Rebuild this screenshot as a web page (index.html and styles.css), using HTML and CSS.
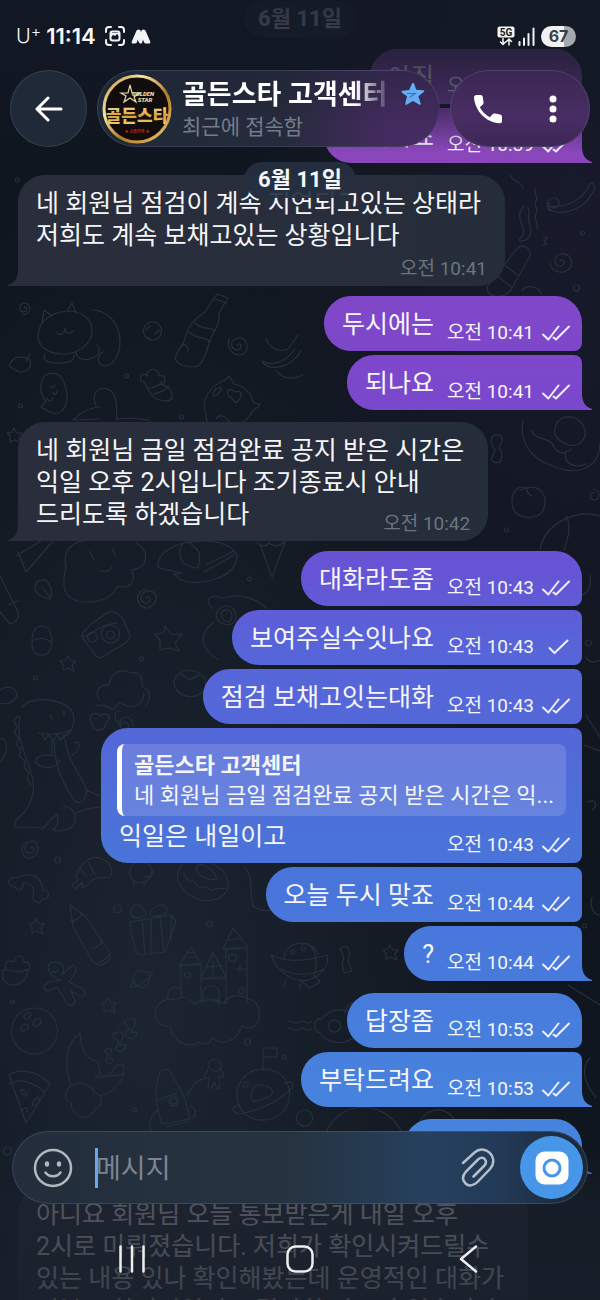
FILE: index.html
```html
<!DOCTYPE html>
<html lang="ko">
<head>
<meta charset="utf-8">
<meta name="viewport" content="width=device-width, initial-scale=1">
<title>골든스타 고객센터</title>
<link rel="stylesheet" href="styles.css">
</head>
<body>
<svg class="defs" width="0" height="0" aria-hidden="true">
  <symbol id="read" viewBox="0 0 28 16"><path d="M1 9.5 6.300 14.500 16.500 1.500M11.500 12.500 14 14.500 27 1.500"/></symbol>
  <symbol id="sent" viewBox="0 0 28 16"><path d="M7.500 9 12.500 14 25.500 1.500"/></symbol>
</svg>
<main class="chat">
  <svg class="doodles" viewBox="0 0 600 1300" preserveAspectRatio="xMidYMin slice" aria-hidden="true">
    <!-- cat, sweets and bottle -->
    <path d="M38 334c2-14 14-22 30-23 14 0 24 8 24 20 0 13-14 23-28 23s-27-6-26-20ZM42 322l2-12 8 6M67 311l5-8 4 10M57 333c5 4 8-1 8-5 0 5 4 7 8 3M92 310c12 0 28 10 28 32 0 14-8 24-15 24-9-1-8-10-2-14M45 354c-3 6 2 9 12 9s18-1 17-8M76 352c0 6 8 10 16 6 8-2 9-8 5-13"/>
    <path d="M217 294l11 4-9 15c2 12-7 20-10 30-3 12-8 24-15 24-8 0-16-2-19-8 2-9 8-13 10-20 2-12 9-20 20-27ZM215 299l11 4M195 323c8 8 12 2 20 8M189 332c8 8 14 3 21 10M180 348c4-6 8-3 8 4"/>
    <path d="M237 345c3-4 7 3 1 5-7 1-10-10 0-12 12-1 12 16 2 17-10 0-14-12-10-16M24 308c2-3 5 2 0 4-5 0-6-8 0-9 8 0 8 12-2 12M152 322a9 9 0 1 0 1 0M146 330l4-4M155 334l4-4M148 338l2 2M9 366c3-8 10-12 20-7 4 6 0 13-10 13ZM26 361l4-7"/>
    <path d="M266 339c5 10 12 14 22 10l10-14M262 361c10 6 24 1 33-12M263 363c8 8 28 5 38-12M277 371c6 9 18 8 26 4"/>
    <path d="M41 384c1-11 13-14 20-7 8 12 9 32-3 36-8 2-12-4-17-6l5-6c-5-5-6-10-5-17ZM50 386c2 3 4 2 5-1M47 398c1 4 6 4 5 0M53 392c1 3 4 3 4-1"/>
    <path d="M141 381c-2-8 4-8 6-5 0-9 12-9 12 0 8-2 7 7 2 9 9 0 12 8 11 14-6 4-17 1-21-5-5-6-5-13-10-13ZM149 388c8-1 12-4 13-7M153 394c8-1 12-4 16-8"/>
    <path d="M96 406c-6-14 5-22 15-15 7 6 5 17 6 30M73 420c7-7 14-12 27-13M73 420l26-1M117 419c15-2 23 0 32 1M204 405c2-12 10-21 21-25l4-4 5 8c11 2 18 11 19 18l7 3-8 7c-4 8-8 10-16 13M204 405l3 17M216 389c-5 6-4 10 3 4 4-5 2-7-3-4ZM231 398c-7-5-2-12 4-6 8-3 8 5 1 11ZM216 419c4-6 12-2 13 4"/>
    <!-- cake, cloud, pie, ice cream -->
    <path d="M16 556l30-18M18 552l8 20 28-32M66 568c-3-15 2-25 20-28M66 568c-7 26 4 34 20 34 16 0 26-4 32-16 12 4 18-4 14-16 17-2 18-20 4-27M100 571c5 1 10 1 12-5M90 551l4 9M112 549l4 7"/>
    <path d="M158 567c-2-14 18-26 44-26 28 0 38 12 34 20-4 17-36 26-55 19l-7-6 8-1c-14-3-22-4-24-6ZM180 555c-1-13 8-17 14-8 8 4 6 14 4 21-10 0-18-6-18-13ZM206 565l28-14M204 572l30-17M260 544l12 33 13-35M257 542c4 5 8 5 12 1 5 4 10 4 16-2"/>
    <path d="M37 582c4-3 7-1 8-3 7 7 8 13 5 20-9-1-16-7-15-13ZM43 588l7 10M146 598c3-4 7 3 1 5-7 1-9-9 0-12 12-2 12 15 1 17-12 1-15-17-2-19M165 626l6 8 11 0-7 9 4 8-10-3-9 2v-10l-5-6 9-1ZM68 656l3 5 5 0-4 4 2 6-5-3-6 2v-6l-3-3 6-1Z"/>
    <path d="M82 637c-1-5 5-8 8-12l17-12c6-4 15 1 18 11l5 11c1 7-12 12-18 16-11 8-14 9-18 2ZM82 637c12-2 16-13 36-14M92 632a5 5 0 1 0 1 0M110 625a9 9 0 1 0 1 0M110 631a4 4 0 1 0 1 0M32 641c0-14 8-17 14-14 6 3 6 11 6 16-1 9-5 13-12 12-7-1-8-6-8-14ZM32 641c7-4 14-3 20 2M0 576l16 32c5 6 2 14-6 16L0 612M8 605l11-4"/>
    <!-- bear and tree -->
    <path d="M212 608c-9-10 0-14 10-10 18-5 34 0 44 10M216 616c2-14 20-14 20 2-3 10-17 8-20-2ZM221 614c2-6 11-6 11 2s-10 7-11-2ZM214 622c-16 12-14 26 4 38M99 700c-5-10 2-16 10-15 2-12 12-18 22-12 10-2 12 6 11 14 10 2 8 14 4 18M174 684c0-18 30-18 32 0-2 16-27 18-32 0ZM181 674l9 6 9-5M0 690c8-6 16-2 17 5-2 7-10 10-17 8"/>
    <!-- dinosaur -->
    <path d="M22 708c4-12 42-12 51 5 3 12-2 22-14 27M38 733c9 2 24 2 33-3M42 734l3 6 4-5 4 6 4-6 4 5 4-6M50 715l2 4M64 711v5M20 716c-4 20 3 30 8 48 6 16 9 28-1 44-4 8-15 12-12 19l28 1 14-14c3 8-1 13-4 16 8 2 20 0 22-8 2-12-7-16-12-16M52 742v14c-8-2-18 0-16 7 8 7 22 5 24-3M54 742c1 24 8 40 20 58 8 8 14-4 12-12-9-18-19-30-21-49M74 743c8-4 6 8-2 12M76 813c14-6 18-5 25-6M86 790l14 6M18 716l-4 5 3 6-3 6 5 5-3 6 5 6-2 6 6 5-1 6 5 6-2 6 4 6"/>
    <path d="M96 706c9-4 12 4 18 3l6-7c12 9 23 4 24-9M120 711c-6-2-6 8-2 12M101 716c-9-8-15 4-8 8-3 9 14 8 13-2 8-4-1-12-5-6ZM119 726c0-12 14-12 14 0M124 722a4 4 0 1 0 1 0M0 738c8 0 9 16 0 24"/>
    <!-- bone, shrimp, doughnut -->
    <path d="M30 848c3-4 7 3 1 5-7 1-9-9 0-12 9-1 10 15-1 17-9 1-11-14-3-16M18 877c-5 0-11 2-9 7 3 4 6 2 7 4 3 5 8 0 7-5 9 0 12 6 10 11-2 9 9 11 9 5 8 2 9-8 1-9-2-14-11-18-25-13ZM76 877c4-14 14-22 24-19 11 4 14 13 10 19-8 2-17-2-22 8l-6 3v-6l-7 7-3-4 6-5ZM88 862l7 13M80 868l6 8"/>
    <path d="M178 873c3-14 18-16 32-10 15 6 21 17 17 27-7 14-27 13-39 4-8-6-12-14-10-21ZM196 866c6-5 18 4 21 13-9 2-21-3-21-13ZM183 873c4 3 3 10 9 8 5 0 3 8 11 6 6-1 6 6 12 2 4-2 8 1 10-1M131 867c6-9 22-5 21 5-2 14-20 15-23 1ZM143 876c6 2 10-1 10-6M134 882v5M144 882v5M245 868c9 8 4 25 8 38 8 7 20 5 30 0"/>
    <!-- pencil, present, gingerbread man -->
    <path d="M70 905l15 11 25 37c3 8-10 16-17 9L73 927ZM70 921c5 1 10-4 12-7M91 948c5 1 12-5 11-10M97 963c6-2 10-4 13-9M130 922l41-7 5 6-11 31-27 3c-5-10-7-24-8-33ZM171 917v22M142 920l3 34M151 919v35M160 917l4 36M146 916c-20 7-18-10-9-11 5 1 9 7 9 11ZM150 916c-2-10 15-15 17-7 1 6-10 8-17 7Z"/>
    <path d="M61 980c-12-2-19-18-6-18 9 0 10 8 7 13l7-7c5-6 9 0 6 5l-6 9 14 7c5 4 1 9-4 7l-8-5 4 11c-3 6-7 4-9 0l-9-15-8 4c-8-1-6-6 0-9ZM52 971l3 2 3-3M36 919l3 5 5 0-3 4 2 6-6-3-5 2v-6l-3-3 5-1ZM108 998l3 5 5 0-3 4 2 6-6-3-5 2v-6l-3-3 5-1Z"/>
    <path d="M3 970c7-2 16 6 24-1 3 14-17 22-24 10ZM6 970c-3-10 5-10 8-8 0-8 9-8 10 0 7-1 7 6 4 8M133 977c4-9 15-8 17 1-2 12-16 13-17-1ZM133 982c-9 12 12 2 20-9-3-2-6-1-8 0"/>
    <!-- bowling ball, pizza, moon -->
    <path d="M34 1008a23 23 0 1 0 1 0ZM24 1017c2-7 9-5 6 0-4 3-5 3-6 0ZM33 1024c2-8 9-7 8-1-4 4-7 4-8 1ZM21 1029c2-7 9-6 7-1-5 4-7 4-7 1ZM9 1075c10-7 28-5 41 9l-24 39ZM9 1084c10-6 24-3 35 8M21 1089c6 3 8 8 4 7-4-2-4-5-4-7ZM33 1102c4-7 8-5 5 1-4 5-7 3-5-1ZM22 1112c2-7 7-4 5 0"/>
    <path d="M80 1033c-14 10-17 30-9 53M80 1033c1 16 4 26 18 28l2 14-5 2c11 2 17-2 21-12l7-1c4 14-9 30-25 32M71 1086c-9 6-6 16 0 17 2 18 20 18 24 6 8-3 10-15-1-16-1-10-20-12-23-7ZM102 1076c8 1 16-1 22-2M104 1051c6-5 9-2 7 1l-2 7c6-1 4 4-1 5-5-5-1-6 0-9ZM112 1035c10-7 13-1 10 5l-3 6c8-4 10 0 2 6-7-2-6-4-2-10ZM124 1022c10-7 14-2 10 4l-4 7c9-3 9 2 2 6-9-2-7-6-3-10Z"/>
    <!-- castle on a cloud -->
    <path d="M181 998v-33h20v29M179 966l12-19 10 16ZM201 978l12-26 13 25ZM201 1003v-24h25v25M226 1000v-51h21v54M223 949l10-21 15 19ZM203 1002v-10c2-9 16-8 16 1v13M183 958l14-1M186 952l9 1M206 967l15-1M213 955v22M228 940l14-2M187 972a3 3 0 1 0 1 0M232 954a4 4 0 1 0 1 0M241 988a3 3 0 1 0 1 0M215 999a2 2 0 1 0 1 0M236 969h10M240 965v7M177 1000c-14-4-24 6-21 18 3 8 10 8 14 9 4 16 18 22 30 15 4 4 10 2 12-4 10 8 24 4 30-12 10 6 18-2 17-12 1-8-4-14-11-15-9-6-20-4-24 5-9-6-22-5-30 0-6-10-16-6-17-4ZM168 999c-2-16 15-14 14-5"/>
    <!-- rocket and astronaut -->
    <path d="M162 1124c-6-16-8-34-4-45 2-14 12-12 16 0 8 10 14 26 16 40ZM158 1100l19-7M173 1096a5 5 0 1 0 1 0M173 1098a3 3 0 1 0 1 0M166 1127l24-6M158 1110c-9 6-10 16-5 26M190 1106c7 3 7 9 2 12M187 1095c6-12 12-16 19-17M208 1064c2-7 14-6 13 3-3 7-12 4-13-3ZM208 1069l-4 9 5 0-1 10h4l2-6 3 7 3-2-1-10h5l-3-8"/>
    <!-- planet and flag -->
    <path d="M262 1069c-32 2-34 48-2 51 34 2 40-42 11-50ZM263 1070v-22l14 0v9h-14M252 1091c4-9 10-6 12-5 8 0 12 9 4 11-6 2-14 8-17 1ZM240 1105c-12 1-6 12 4 8 20-4 36-13 48-25 3-7-4-8-8-4M244 1083c4-4 6 0 2 5-4 0-3-3-2-5Z"/>
    <!-- flying saucer and shells -->
    <path d="M271 955c12 6 30 8 56 0 4 16-16 30-33 24-12-4-20-15-23-24ZM284 958c0-16 28-22 34-3M281 969c12 6 27 8 43 0M286 981l-2 6M300 984v6M292 950a2 2 0 1 0 1 0M303 947a2 2 0 1 0 1 0M288 1022c4-4 6 4 11 0s7 4 12 0M288 1029c4-4 6 4 11 0s7 4 12 0M321 1020c-8-5-8 14-2 12 12 17 38 13 42-8-6-17-30-19-40-4ZM334 1020a6 6 0 1 0 1 0M345 1013c2-10 12-14 16-8M380 1020c1-14 7-20 18-26 4 11-4 22-12 25M302 945c10-7 18 16 12 30l6 7-10 6-10-8M340 948l7-2 3 8-2 7 4 10-8 2-2-9 2-6ZM390 945l3 5 5 0-3 4 2 6-6-3-5 2v-6l-3-3 5-1Z"/>
    <path d="M304 1110a8 8 0 1 0 1 0M325 1135c12-36 62-38 78 0M418 1125c8-18 28-22 40 0"/>
    <!-- party side -->
    <path d="M510 175c4 9 12 6 13 13M549 206c15 3 31-5 39-18 2-10 10-3 5 4-8 15-25 24-41 19-5-1-5-4-3-5ZM524 206c-8 8-3 16-1 22 4 9-6 10-3 13 12 0 12-11 9-19-2-7 2-9-1-14M536 188c-4 6 3 7 0 13s3 7 0 13 3 8 1 15M516 250c6-8 15-2 14 6l-19 34c-9 10-24 8-24-3ZM503 264l16 12M494 273l17 14M549 203a5 5 0 1 0 5-5c-8 0-9 10-2 12M560 261c3-4 7 3 1 5-7 1-9-9 0-12 12-2 15 15 3 18-8 1-14-4-14-9M543 237l4 1-3 3 3 3-5 1M522 291c4-7 18-5 19 3"/>
    <path d="M523 420c-4 22 8 38 27 45 30 14 50 0 50-22M531 430c5 11 20 7 23 17 4 8 13 7 17 2M555 428c3-15 24-16 30 2 2 14-14 20-22 12-6-2-9-7-8-14ZM566 451c-3 12 8 18 20 13M492 437c4-4 12-2 10 4l-3 7c4 3 3 9 1 14-6 2-10-1-8-5l3-7c-3-4-5-8-3-13ZM527 488c-16-5-18 16-12 24 8 8 23 6 27 0 8-14-1-28-15-24ZM527 488c0 5 1 6 5 8M527 488l-7 2M594 492c-6 2-4 8 1 8 6-2 5-10-2-11M540 550c4-25 34-42 60-34M566 516c6 10 2 22-2 34M580 595c8 0 12-10 10-20M586 658c5 6 10 4 14 2M586 715l14 22M584 745l16 6M588 802c8-4 10 4 4 8M592 897c-3 12 3 18 8 18M590 1058c-10 10-6 24 6 40M568 985l32 20"/>
    <!-- small sparkles -->
    <path d="M17 178a2 2 0 1 0 1 0M126 374a2 2 0 1 0 1 0M181 415a2 2 0 1 0 1 0M20 404a2 2 0 1 0 1 0M249 577a2 2 0 1 0 1 0M141 657a2 2 0 1 0 1 0M35 676a2 2 0 1 0 1 0M57 857a3 3 0 1 0 1 0M117 905a4 4 0 1 0 1 0M209 921a3 3 0 1 0 1 0M247 1039a3 3 0 1 0 1 0M134 1108a2 2 0 1 0 1 0M284 1055a2 2 0 1 0 1 0M12 1000a2 2 0 1 0 1 0M582 231a2 2 0 1 0 1 0M576 285a3 3 0 1 0 1 0M506 528a2 2 0 1 0 1 0M588 640a3 3 0 1 0 1 0M584 924a2 2 0 1 0 1 0M7 1147a4 4 0 1 0 1 0M14 428l3 5 5 0-3 4 2 6-6-3-5 2v-6l-3-3 5-1Z"/>
  </svg>

  <ol class="messages">
    <li class="day date-pill">6월 11일</li>
    <li class="msg out first"><p>아직</p><span class="meta"><time>오전 10:39</time><svg class="tick"><use href="#read"/></svg></span></li>
    <li class="msg out last"><p>는것이죠</p><span class="meta"><time>오전 10:39</time><svg class="tick"><use href="#read"/></svg></span></li>

    <li class="msg in stacked"><p>네 회원님 점검이 계속 지연되고있는 상태라<br>저희도 계속 보채고있는 상황입니다</p><span class="meta"><time>오전 10:41</time></span></li>

    <li class="msg out first"><p>두시에는</p><span class="meta"><time>오전 10:41</time><svg class="tick"><use href="#read"/></svg></span></li>
    <li class="msg out last"><p>되나요</p><span class="meta"><time>오전 10:41</time><svg class="tick"><use href="#read"/></svg></span></li>

    <li class="msg in"><p>네 회원님 금일 점검완료 공지 받은 시간은<br>익일 오후 2시입니다 조기종료시 안내<br>드리도록 하겠습니다</p><span class="meta"><time>오전 10:42</time></span></li>

    <li class="msg out first"><p>대화라도좀</p><span class="meta"><time>오전 10:43</time><svg class="tick"><use href="#read"/></svg></span></li>
    <li class="msg out"><p>보여주실수잇나요</p><span class="meta"><time>오전 10:43</time><svg class="tick"><use href="#sent"/></svg></span></li>
    <li class="msg out"><p>점검 보채고잇는대화</p><span class="meta"><time>오전 10:43</time><svg class="tick"><use href="#read"/></svg></span></li>
    <li class="msg out reply">
      <blockquote class="quote"><strong>골든스타 고객센터</strong><span>네 회원님 금일 점검완료 공지 받은 시간은 익...</span></blockquote>
      <p>익일은 내일이고</p><span class="meta"><time>오전 10:43</time><svg class="tick"><use href="#read"/></svg></span>
    </li>
    <li class="msg out"><p>오늘 두시 맞죠</p><span class="meta"><time>오전 10:44</time><svg class="tick"><use href="#read"/></svg></span></li>
    <li class="msg out last"><p>?</p><span class="meta"><time>오전 10:44</time><svg class="tick"><use href="#read"/></svg></span></li>

    <li class="msg out first"><p>답장좀</p><span class="meta"><time>오전 10:53</time><svg class="tick"><use href="#read"/></svg></span></li>
    <li class="msg out last"><p>부탁드려요</p><span class="meta"><time>오전 10:53</time><svg class="tick"><use href="#read"/></svg></span></li>

    <li class="msg out first last"><p>?</p><span class="meta"><time>오전 10:54</time><svg class="tick"><use href="#read"/></svg></span></li>

    <li class="msg in"><p>아니요 회원님 오늘 통보받은게 내일 오후<br>2시로 미뤄졌습니다. 저희가 확인시켜드릴수<br>있는 내용 있나 확인해봤는데 운영적인 대화가<br>전부 포함되어있어 드릴만한 자료가 없습니다</p></li>
  </ol>

  <div class="scrim"></div>

  <header class="top">
    <div class="status">
      <span class="carrier">U<sup>+</sup></span>
      <span class="clock">11:14</span>
      <svg class="capture" viewBox="0 0 20 20"><path d="M1 6V4a3 3 0 0 1 3-3h2M14 1h2a3 3 0 0 1 3 3v2M19 14v2a3 3 0 0 1-3 3h-2M6 19H4a3 3 0 0 1-3-3v-2"/><rect x="5.500" y="5.500" width="9" height="9" rx="2"/><path class="solid" d="M6 11l2-2 2 1 2-2 2 2v-3H6Z"/></svg>
      <svg class="brand" viewBox="0 0 20 15"><path d="M.8 12.500 5 2.800C6-.2 9.200-.2 10 3 10.800-.2 14-.2 15 2.800L19.200 12.500C19.600 13.800 19 14.500 18 14.500H14.800C13.500 14.500 13 13.500 12.500 12L12 10.500 11.300 13C11 14 10.500 14.500 9.500 14.500 8.300 14.500 7.800 13.500 7.400 12.300L6.800 10.500 6.200 12.500C5.800 13.800 5.200 14.500 4.200 14.500H2C.9 14.500.4 13.700.8 12.500Z"/></svg>
      <svg class="network" viewBox="0 0 18 20" role="img"><rect x=".5" y=".5" width="17" height="11" rx="2"/><text x="9" y="9.500">5G</text><path d="M6 12.500v6M3.500 16 6 18.500 8.500 16M12 19v-6M9.500 15.500 12 13l2.500 2.500"/></svg>
      <svg class="signal" viewBox="0 0 17 19"><path d="M1.500 15v3M6 11.500V18M10.500 7v11M15.500 1.500V18"/></svg>
      <span class="battery">67</span>
    </div>
    <div class="bar">
      <button class="glass back" aria-label="뒤로"><svg viewBox="0 0 28 26"><path d="M26 13H2.500M13 2 2 13l11 11"/></svg></button>
      <div class="glass peer">
        <svg class="avatar" viewBox="0 0 70 70" role="img" aria-label="골든스타">
          <defs><linearGradient id="gold" x1="0" y1="0" x2="1" y2="1"><stop offset="0" stop-color="#c08a2c"/><stop offset=".3" stop-color="#f8e5a0"/><stop offset=".6" stop-color="#b17a24"/><stop offset="1" stop-color="#eecb70"/></linearGradient><linearGradient id="foil" x1="0" y1="0" x2="0" y2="1"><stop offset="0" stop-color="#fff3b4"/><stop offset=".55" stop-color="#d7a13d"/><stop offset="1" stop-color="#f4d97e"/></linearGradient></defs>
          <circle cx="35" cy="35" r="33" fill="#110d0c" stroke="url(#gold)" stroke-width="3"/>
          <path d="M28 11 30 19 38 19 32 23 34 28 28 24 22 28 24 22 19 19 26 19Z" fill="none" stroke="#e9d9ad" stroke-width="1.200"/>
          <text x="41" y="22" class="tiny" fill="#f0dcae">GOLDEN</text>
          <text x="43" y="28" class="tiny" fill="#f0dcae">STAR</text>
          <text x="35" y="48" class="crest" fill="url(#foil)">골든스타</text>
          <text x="35" y="59" class="motto" fill="#c62720">★ 스폴라자 ★</text>
        </svg>
        <div class="who"><h1>골든스타 고객센터</h1><p>최근에 접속함</p></div>
        <svg class="star" viewBox="0 0 22 22"><path d="M10 1.500c.5-1 1.500-1 2 0l2 5.500 6 .5c1.500 0 2 1 .5 2L16 13l2 6.500c.3 1.500-.5 2-1.500 1.200L11 17.500l-5.500 3.200C4.500 21.500 3.500 21 4 19.500L5.500 13 1 9.800C0 9 .3 8 1.500 8l6-.7Z"/><path class="glint" d="M5.500 10.500 13 10.500 8 14"/></svg>
      </div>
      <div class="glass actions">
        <button aria-label="통화"><svg class="phone" viewBox="0 0 30 30"><path d="M3.500 1h4C9 1 9.600 2 9.800 3.200L10.500 8c.2 1.200 0 2-1 2.800L6.800 13.200C9 17.500 12.500 21 16.800 23.200L19.300 20.600c.8-.9 1.700-1.200 2.900-1l4.800.8c1.300.2 2 1 2 2.300V27c0 1.500-1 2.300-2.500 2.200C13 28.500 2 17 1 3.500 1 2 2 1 3.500 1Z"/></svg></button>
        <button aria-label="메뉴"><svg class="more" viewBox="0 0 8 28"><circle cx="4" cy="4" r="3.500"/><circle cx="4" cy="14" r="3.500"/><circle cx="4" cy="24" r="3.500"/></svg></button>
      </div>
    </div>
    <div class="date-pill floating">6월 11일</div>
  </header>

  <footer class="bottom">
    <form class="composer">
      <button type="button" class="emoji" aria-label="이모티콘"><svg viewBox="0 0 40 40"><circle cx="20" cy="20" r="18"/><path d="M12.500 24.500c3.500 5 11.500 5 15 0"/><ellipse cx="14" cy="16" rx="2.200" ry="2.800"/><ellipse cx="26" cy="16" rx="2.200" ry="2.800"/></svg></button>
      <span class="caret"></span>
      <input type="text" aria-label="메시지" placeholder="메시지">
      <button type="button" class="attach" aria-label="첨부"><svg viewBox="0 0 34 40"><path d="M2 15 13.500 4.500C20-1 28 2 31 8c2.500 5 1 9.500-2 13L16.500 34c-4 4-9 4.500-12 1.500-3.500-3.500-3-8 .5-12L17 11.500c3-2.500 5.500-2 7 0 1.500 2 1 4.500-1 6.500L12.500 28.500"/></svg></button>
      <button type="button" class="camera" aria-label="카메라"><svg viewBox="0 0 34 34"><rect x=".5" y=".5" width="33" height="33" rx="9"/><circle cx="17" cy="17" r="8"/></svg></button>
    </form>
    <nav class="keys">
      <button aria-label="최근 앱"><svg viewBox="0 0 28 28"><path d="M2.500 1.500v25M14 1.500v25M25.500 1.500v25"/></svg></button>
      <button aria-label="홈"><svg viewBox="0 0 28 28"><rect x="1.500" y="1.500" width="25" height="25" rx="8"/></svg></button>
      <button aria-label="이전"><svg viewBox="0 0 28 28"><path d="M22 1.500 7 14l15 12.500"/></svg></button>
    </nav>
  </footer>
</main>
</body>
</html>
```
FILE: styles.css
```css
* { box-sizing: border-box; }

body {
  margin: 0;
  background: #121923;
  color: #f6f6f9;
  font-family: Roboto, "Noto Sans CJK KR", sans-serif;
}

h1, p, ol, blockquote { margin: 0; padding: 0; }

button {
  padding: 0;
  border: 0;
  background: none;
  color: inherit;
  display: grid;
  place-items: center;
}

.defs { position: absolute; }

.chat {
  display: grid;
  grid-template: 100vh / 100%;
  overflow: hidden;
  background:
    radial-gradient(ellipse at 95% 15%, #181a2b 0, transparent 40%),
    radial-gradient(ellipse at 25% 78%, #1b2430 0, transparent 60%),
    #10161f;
}

.chat > * { grid-area: 1 / 1; min-width: 0; }

.doodles {
  width: 100%;
  height: 100%;
  fill: none;
  stroke: #26313d;
  stroke-width: 1.2;
  stroke-linecap: round;
  stroke-linejoin: round;
}

/* Messages */

.messages {
  z-index: 0;
  list-style: none;
  padding: 1px 18px 0;
  display: flex;
  flex-direction: column;
  align-items: flex-start;
  min-height: 0;
}

.date-pill {
  align-self: center;
  height: 36px;
  padding: 0 14px;
  border-radius: 18px;
  background: #232d3b;
  font-size: 22px;
  font-weight: 700;
  line-height: 36px;
  white-space: nowrap;
}

.msg {
  position: relative;
  flex: none;
  display: grid;
  grid-template-columns: auto auto;
  column-gap: 13px;
  margin-top: 4px;
  font-size: 25px;
  line-height: 32px;
  white-space: nowrap;
}

.out {
  align-self: flex-end;
  padding: 13px 12px 10px 18px;
  border-radius: 27px 8px 8px 27px;
}

.out, .out.last::after {
  background: linear-gradient(#9048b4 0, #8a46bb 12%, #8047c9 24%, #7a48cd 31%, #6654d5 44%, #5765d9 50%, #5368d8 57%, #4a73d9 65%, #4879dc 74%, #4782dd 84%, #4389df 100%) fixed;
}

.first { margin-top: 12px; border-top-right-radius: 27px; }
.last { border-bottom-right-radius: 0; }
.in + .first { margin-top: 10px; }

.in {
  grid-template-columns: auto;
  margin-top: 12px;
  padding: 13px 24px 10px 18px;
  border-radius: 27px 27px 27px 0;
  background: linear-gradient(90deg, #2a2e3c, #262d3a);
}

.out.last::after, .in::before {
  content: "";
  position: absolute;
  bottom: 0;
  width: 10px;
  height: 16px;
}

.out.last::after {
  left: 100%;
  clip-path: path("M0 0C0 7 3 13 10 15V16H0Z");
}

.in::before {
  right: 100%;
  background: #2a2e3c;
  clip-path: path("M10 0C10 7 7 13 0 15V16H10Z");
}

.meta {
  display: flex;
  align-items: center;
  align-self: end;
  justify-self: end;
  gap: 8px;
  margin-bottom: -3px;
  font-size: 19px;
  line-height: 22px;
}

.in p { grid-area: 1 / 1; }

.in .meta {
  grid-area: 1 / 1;
  margin: 0 -6px -4px 0;
  color: #6c7480;
}

.in.stacked .meta { grid-area: 2 / 1; margin-top: 6px; }

.tick {
  width: 28px;
  height: 16px;
  fill: none;
  stroke: #f1efff;
  stroke-width: 2;
  stroke-linecap: round;
  stroke-linejoin: round;
}

.out.reply { padding-top: 16px; }

.quote {
  grid-column: 1 / -1;
  display: grid;
  margin: 0 4px 5px -2px;
  padding: 7px 12px 5px 12px;
  border-left: 5px solid #fff;
  border-radius: 8px;
  background: rgba(255, 255, 255, .14);
  font-size: 22px;
  line-height: 30px;
}

/* Fades the conversation behind the top and bottom bars */
.scrim {
  z-index: 1;
  background:
    linear-gradient(rgba(18, 24, 36, .88) 0, rgba(18, 24, 36, .78) 60px, rgba(18, 24, 36, .6) 104px, rgba(18, 24, 36, 0) 152px),
    linear-gradient(to top, rgba(24, 31, 42, .84) 0, rgba(24, 31, 42, .75) 96px, transparent 150px);
}

/* Top bars */

.top {
  z-index: 2;
  align-self: start;
  display: grid;
}

.status {
  display: flex;
  align-items: center;
  height: 70px;
  padding: 2px 24px 0 16px;
}

.carrier {
  margin-right: 5px;
  font-family: Inter, sans-serif;
  font-size: 20px;
  font-weight: 300;
  line-height: 24px;
}

.carrier sup { font-size: 16px; line-height: 0; vertical-align: 6px; }

.clock {
  margin-right: 9px;
  font-family: Inter, sans-serif;
  font-size: 22px;
  font-weight: 600;
}

.status svg { fill: none; stroke: #f2f3f5; stroke-width: 2; stroke-linecap: round; }
.status .capture { width: 20px; height: 20px; margin-right: 6px; }
.status .capture .solid { fill: #f2f3f5; stroke: none; }
.status .brand { width: 20px; height: 15px; fill: #f2f3f5; stroke: none; }
.status .network { width: 18px; height: 20px; margin-left: auto; stroke-width: 1.5; }
.network rect { fill: #f2f3f5; stroke: none; }
.network text { fill: #141b26; stroke: none; font-size: 10px; font-weight: 700; text-anchor: middle; }
.status .signal { width: 17px; height: 19px; margin: 0 6px 0 3px; }

.battery {
  width: 35px;
  height: 21px;
  border-radius: 11px;
  background: linear-gradient(90deg, #f0f1f3 67%, #a5a8ae 67%);
  color: #3b3f47;
  font-family: Inter, sans-serif;
  font-size: 16px;
  font-weight: 700;
  line-height: 21px;
  text-align: center;
}

.bar {
  display: grid;
  grid-template-columns: 77px 1fr 140px;
  gap: 10px;
  height: 77px;
  padding: 0 10px;
}

.glass {
  border: 1px solid rgba(160, 180, 210, .16);
  border-radius: 39px;
  background: #1f2938;
}

.back svg { width: 28px; height: 26px; }
.back svg { fill: none; stroke: #fff; stroke-width: 3; stroke-linecap: round; stroke-linejoin: round; }

.peer {
  display: flex;
  align-items: center;
  min-width: 0;
  padding: 0 14px 0 4px;
  background:
    linear-gradient(rgba(31, 34, 52, .5), transparent 70%),
    linear-gradient(90deg, #1f2a38 0, #262b3c 55%, #442b60 85%);
}

.avatar { flex: none; width: 70px; height: 70px; }
.tiny { font: italic 900 6px Roboto, sans-serif; text-anchor: middle; }
.crest { font: 900 17px "Noto Sans CJK KR", sans-serif; text-anchor: middle; }
.motto { font: 700 4px "Noto Sans CJK KR", sans-serif; text-anchor: middle; }

.who {
  flex: 1;
  min-width: 0;
  margin-left: 10px;
  padding-top: 2px;
  white-space: nowrap;
  overflow: hidden;
}

.who h1 {
  font-size: 27px;
  font-weight: 700;
  line-height: 34px;
  background: linear-gradient(90deg, #fff calc(100% - 38px), rgba(255, 255, 255, .15) calc(100% - 6px));
  background-clip: text;
  color: transparent;
}

.who p { color: #747c8c; font-size: 21px; line-height: 30px; }

.star { flex: none; align-self: flex-start; width: 24px; height: 24px; margin: 11px 0 0 8px; fill: #67adf6; }
.glint { fill: none; stroke: #3f6fb0; stroke-width: 1; }

.actions {
  display: grid;
  grid-template-columns: 1fr 1fr;
  padding: 0 4px;
  background: linear-gradient(#3a2852, #482d63 60%, #3d2856);
}

.actions svg { fill: #fff; }
.phone { width: 30px; height: 30px; }
.more { width: 8px; height: 28px; }

.floating {
  justify-self: center;
  margin-top: 15px;
  background: rgba(37, 48, 64, .92);
}

/* Bottom bars */

.bottom {
  z-index: 2;
  align-self: end;
}

.composer {
  display: flex;
  align-items: center;
  height: 73px;
  margin: 0 12px;
  padding: 0 4px 0 20px;
  border: 1px solid rgba(160, 180, 210, .18);
  border-radius: 37px;
  background: linear-gradient(90deg, #232d3b 0, #263442 50%, #26405e 72%, #223a57 85%, #1b2736 100%);
}

.emoji svg { width: 40px; height: 40px; fill: none; stroke: #b3b8be; stroke-width: 2.5; stroke-linecap: round; }
.emoji ellipse { fill: #b3b8be; stroke: none; }

.caret { width: 3px; height: 40px; margin: 0 -2px 0 22px; background: #6aa7e6; }

.composer input {
  flex: 1;
  min-width: 0;
  height: 40px;
  padding: 2px 0 0;
  border: 0;
  outline: 0;
  background: none;
  color: #fff;
  font: 27px Roboto, "Noto Sans CJK KR", sans-serif;
}

.composer input::placeholder { color: #7b8591; opacity: 1; }

.attach svg { width: 34px; height: 40px; fill: none; stroke: #b5bfca; stroke-width: 2.5; stroke-linecap: round; }

.camera {
  width: 63px;
  height: 63px;
  margin-left: 25px;
  border-radius: 50%;
  background: #4796e8;
}

.camera svg { width: 34px; height: 34px; fill: #fff; }
.camera circle { stroke: #4796e8; stroke-width: 3; }

.keys {
  display: grid;
  grid-template-columns: repeat(3, 28%);
  justify-content: center;
  align-items: center;
  height: 96px;
  padding-top: 14px;
}

.keys svg { width: 28px; height: 28px; fill: none; stroke: #eceef0; stroke-width: 2.5; stroke-linecap: round; stroke-linejoin: round; }
```
